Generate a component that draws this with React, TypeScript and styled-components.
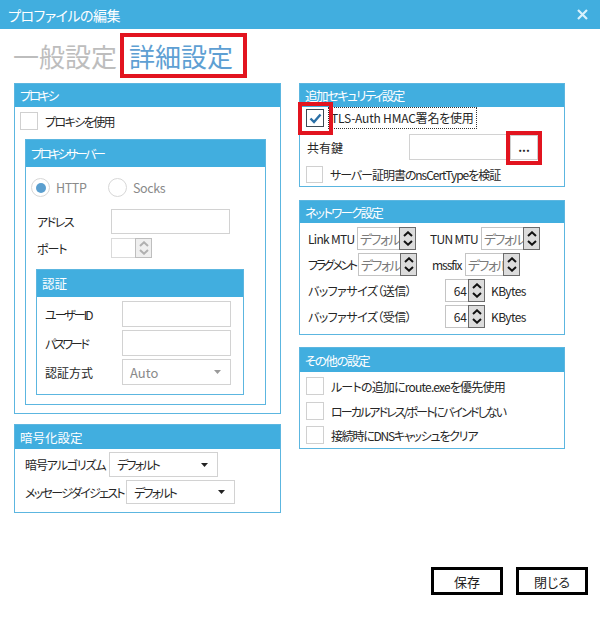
import React from "react";
import styled, { createGlobalStyle } from "styled-components";

/* 色 */
const C = {
  blue: "#41AEDF",
  border: "#5CB6E0",
  tabOff: "#BDBDBD",
  tabOn: "#5E9FD3",
  red: "#E2141F",
  text: "#262626",
  gray: "#8A8A8A",
  field: "#D2D2D2",
};

const Global = createGlobalStyle`
  html, body { margin: 0; padding: 0; background: #fff; }
  body {
    font-family: "Noto Sans CJK JP", "Noto Sans", sans-serif;
    font-feature-settings: "palt";
    color: ${C.text};
  }
`;

const Window = styled.div`
  width: 600px;
  height: 628px;
  display: flex;
  flex-direction: column;
  background: #fff;
  font-size: 12px;
`;

/* タイトルバー */
const TitleBar = styled.div`
  height: 29px;
  background: ${C.blue};
  color: #fff;
  display: flex;
  align-items: center;
  justify-content: space-between;
  padding: 0 12px 0 8px;
  font-size: 14px;
  letter-spacing: -0.5px;
`;

const Close = styled.span`
  display: flex;
  width: 11px;
  height: 11px;
`;

/* タブ */
const TabRow = styled.div`
  height: 51px;
  display: flex;
  align-items: center;
  padding-left: 13px;
  gap: 12px;
`;

const Tab = styled.div<{ $on?: boolean }>`
  position: relative;
  font-size: 26px;
  line-height: 30px;
  color: ${(p) => (p.$on ? C.tabOn : C.tabOff)};
  margin-top: 3px;
`;

const RedMark = styled.span<{ $t: number; $r: number; $b: number; $l: number }>`
  position: absolute;
  top: ${(p) => p.$t}px;
  right: ${(p) => p.$r}px;
  bottom: ${(p) => p.$b}px;
  left: ${(p) => p.$l}px;
  border: 4px solid ${C.red};
  pointer-events: none;
`;

/* 本体 */
const Main = styled.div`
  display: flex;
  gap: 18px;
  padding: 3px 0 0 14px;
`;

const Column = styled.div<{ $w: number }>`
  width: ${(p) => p.$w}px;
  display: flex;
  flex-direction: column;
`;

const Panel = styled.div<{ $mt?: number; $ml?: number; $mr?: number; $w?: number }>`
  border: 1px solid ${C.border};
  background: #fff;
  margin: ${(p) => p.$mt ?? 0}px ${(p) => p.$mr ?? 0}px 0 ${(p) => p.$ml ?? 0}px;
  ${(p) => (p.$w ? `width: ${p.$w}px;` : "")}
`;

const PanelHead = styled.div<{ $h: number; $ls?: number }>`
  height: ${(p) => p.$h}px;
  background: ${C.blue};
  color: #fff;
  font-size: 12.5px;
  letter-spacing: ${(p) => p.$ls ?? 0}px;
  display: flex;
  align-items: center;
  padding-left: 5px;
  white-space: nowrap;
`;

const PanelBody = styled.div<{ $pad: string }>`
  padding: ${(p) => p.$pad};
  display: flex;
  flex-direction: column;
`;

/* 部品 */
const Row = styled.div<{ $mt?: number; $pl?: number; $gap?: number }>`
  display: flex;
  align-items: center;
  margin-top: ${(p) => p.$mt ?? 0}px;
  padding-left: ${(p) => p.$pl ?? 0}px;
  gap: ${(p) => p.$gap ?? 0}px;
`;

const Label = styled.span<{ $w?: number; $ls?: number; $ml?: number }>`
  ${(p) => (p.$w ? `width: ${p.$w}px; flex-shrink: 0;` : "")}
  margin-left: ${(p) => p.$ml ?? 0}px;
  letter-spacing: ${(p) => p.$ls ?? 0}px;
  color: ${C.text};
  white-space: nowrap;
`;

const Box = styled.span<{ $size: number; $on?: boolean }>`
  width: ${(p) => p.$size}px;
  height: ${(p) => p.$size}px;
  box-sizing: border-box;
  border: 1px solid ${(p) => (p.$on ? "#3D4A55" : "#D0D0D0")};
  background: #fff;
  flex-shrink: 0;
  display: flex;
  align-items: center;
  justify-content: center;
`;

const Focus = styled.span<{ $ls?: number }>`
  border: 1px dotted #333;
  padding: 2px;
  line-height: 16px;
  letter-spacing: ${(p) => p.$ls ?? 0}px;
  white-space: nowrap;
`;

const Radio = styled.span<{ $on?: boolean }>`
  width: 19px;
  height: 19px;
  box-sizing: border-box;
  border: 1px solid #D7D7D7;
  border-radius: 50%;
  display: flex;
  align-items: center;
  justify-content: center;
  &::after {
    content: "";
    width: 10px;
    height: 10px;
    border-radius: 50%;
    background: ${(p) => (p.$on ? "#5B9FCF" : "transparent")};
  }
`;

const RadioItem = styled.span<{ $w?: number }>`
  display: flex;
  align-items: center;
  gap: 6px;
  ${(p) => (p.$w ? `width: ${p.$w}px;` : "")}
  color: ${C.gray};
  font-size: 12.5px;
  letter-spacing: -0.4px;
`;

const Field = styled.div<{ $w: number; $h: number }>`
  width: ${(p) => p.$w}px;
  height: ${(p) => p.$h}px;
  box-sizing: border-box;
  border: 1px solid ${C.field};
  background: #fff;
  flex-shrink: 0;
`;

const Select = styled.div<{ $w: number; $h: number; $muted?: boolean }>`
  width: ${(p) => p.$w}px;
  height: ${(p) => p.$h}px;
  box-sizing: border-box;
  border: 1px solid ${C.field};
  display: flex;
  align-items: center;
  justify-content: space-between;
  padding: 0 9px 0 7px;
  color: ${(p) => (p.$muted ? C.gray : C.text)};
  font-size: ${(p) => (p.$muted ? 13 : 12)}px;
  letter-spacing: ${(p) => (p.$muted ? 0 : -1.8)}px;
  flex-shrink: 0;
  white-space: nowrap;
`;

const Spin = styled.div<{ $h: number }>`
  display: flex;
  height: ${(p) => p.$h}px;
  flex-shrink: 0;
`;

const SpinInput = styled.div<{ $w: number; $dim?: boolean; $right?: boolean }>`
  width: ${(p) => p.$w}px;
  box-sizing: border-box;
  border: 1px solid ${(p) => (p.$dim ? "#DADADA" : "#C4C4C4")};
  border-right: none;
  overflow: hidden;
  white-space: nowrap;
  display: flex;
  align-items: center;
  justify-content: ${(p) => (p.$right ? "flex-end" : "flex-start")};
  padding: ${(p) => (p.$right ? "0 1px 0 0" : "0 0 0 2px")};
  font-size: ${(p) => (p.$right ? 12 : 13)}px;
  letter-spacing: ${(p) => (p.$right ? 0 : -1.6)}px;
  color: ${(p) => (p.$right ? C.text : "#7A7A7A")};
`;

const SpinArrows = styled.div<{ $dim?: boolean }>`
  width: 17px;
  box-sizing: border-box;
  border: 1px solid ${(p) => (p.$dim ? "#BEBEBE" : "#6B6B6B")};
  background: ${(p) => (p.$dim ? "#EFEFEF" : "#DCDCDC")};
  display: flex;
  flex-direction: column;
  align-items: center;
  justify-content: space-evenly;
`;

const SmallBtn = styled.div`
  width: 28px;
  height: 25px;
  box-sizing: border-box;
  border: 1px solid #CFCFCF;
  background: #fff;
  display: flex;
  align-items: flex-end;
  justify-content: center;
  padding-bottom: 6px;
  font-size: 12px;
  font-weight: 700;
  line-height: 1;
`;

const Marked = styled.div<{ $ml?: number }>`
  position: relative;
  display: flex;
  margin-left: ${(p) => p.$ml ?? 0}px;
`;

const Pair = styled.div<{ $w?: number }>`
  display: flex;
  align-items: center;
  ${(p) => (p.$w ? `width: ${p.$w}px; flex-shrink: 0;` : "")}
`;

const Footer = styled.div`
  margin-top: auto;
  display: flex;
  justify-content: flex-end;
  gap: 13px;
  padding: 0 12px 33px 0;
`;

const Button = styled.button`
  all: unset;
  width: 72px;
  height: 28px;
  box-sizing: border-box;
  border: 3px solid #000;
  background: #fff;
  display: flex;
  align-items: center;
  justify-content: center;
  font-size: 13px;
  color: #1E1E1E;
  font-family: inherit;
`;

/* 小物 */
const Chevron = ({ up, color }: { up?: boolean; color: string }) => (
  <svg width="10" height="6" viewBox="0 0 10 6">
    <polyline
      points={up ? "1,5 5,1.3 9,5" : "1,1 5,4.7 9,1"}
      fill="none"
      stroke={color}
      strokeWidth="2"
    />
  </svg>
);

const Caret = ({ color }: { color: string }) => (
  <svg width="7" height="4" viewBox="0 0 7 4">
    <polygon points="0,0 7,0 3.5,4" fill={color} />
  </svg>
);

function Spinner({ w, h, value, dim, right }: { w: number; h: number; value?: string; dim?: boolean; right?: boolean }) {
  const c = dim ? "#B0B0B0" : "#111";
  return (
    <Spin $h={h}>
      <SpinInput $w={w} $dim={dim} $right={right}>{value}</SpinInput>
      <SpinArrows $dim={dim}>
        <Chevron up color={c} />
        <Chevron color={c} />
      </SpinArrows>
    </Spin>
  );
}

function Check({ size = 18, on }: { size?: number; on?: boolean }) {
  return (
    <Box $size={size} $on={on}>
      {on && (
        <svg width="13" height="11" viewBox="0 0 13 11">
          <polyline points="1.5,5.5 5,9 11.5,1.5" fill="none" stroke="#2A6FA6" strokeWidth="2.4" />
        </svg>
      )}
    </Box>
  );
}

function CheckRow({ text, ls, mt, size }: { text: string; ls: number; mt?: number; size?: number }) {
  return (
    <Row $mt={mt} $gap={7}>
      <Check size={size} />
      <Label $ls={ls}>{text}</Label>
    </Row>
  );
}

export default function App() {
  return (
    <Window>
      <Global />
      <TitleBar>
        <span>プロファイルの編集</span>
        <Close>
          <svg width="11" height="11" viewBox="0 0 11 11">
            <path d="M1 1 L10 10 M10 1 L1 10" stroke="#D8F1FC" strokeWidth="2.2" />
          </svg>
        </Close>
      </TitleBar>

      <TabRow>
        <Tab>一般設定</Tab>
        <Tab $on>
          詳細設定
          <RedMark $t={-8} $r={-14} $b={-7} $l={-9} />
        </Tab>
      </TabRow>

      <Main>
        <Column $w={267}>
          <Panel>
            <PanelHead $h={23} $ls={-2.6}>プロキシ</PanelHead>
            <PanelBody $pad="5px 14px 8px 5px">
              <CheckRow text="プロキシを使用" ls={-1.6} />
              <Panel $mt={9} $ml={5}>
                <PanelHead $h={27} $ls={-2.9}>プロキシサーバー</PanelHead>
                <PanelBody $pad="11px 0 9px 0">
                  <Row $pl={5}>
                    <RadioItem $w={77}>
                      <Radio $on />
                      HTTP
                    </RadioItem>
                    <RadioItem>
                      <Radio />
                      Socks
                    </RadioItem>
                  </Row>
                  <Row $mt={12} $pl={11}>
                    <Label $w={74} $ls={-1.5}>アドレス</Label>
                    <Field $w={119} $h={25} />
                  </Row>
                  <Row $mt={4} $pl={11}>
                    <Label $w={74} $ls={-1}>ポート</Label>
                    <Spinner w={24} h={20} dim />
                  </Row>
                  <Panel $mt={11} $ml={10} $w={206}>
                    <PanelHead $h={27}>認証</PanelHead>
                    <PanelBody $pad="4px 0 9px 8px">
                      <Row>
                        <Label $w={77} $ls={-2}>ユーザーID</Label>
                        <Field $w={109} $h={26} />
                      </Row>
                      <Row $mt={3}>
                        <Label $w={77} $ls={-2.3}>パスワード</Label>
                        <Field $w={109} $h={26} />
                      </Row>
                      <Row $mt={3}>
                        <Label $w={77}>認証方式</Label>
                        <Select $w={109} $h={26} $muted>
                          Auto
                          <Caret color="#9A9A9A" />
                        </Select>
                      </Row>
                    </PanelBody>
                  </Panel>
                </PanelBody>
              </Panel>
            </PanelBody>
          </Panel>

          <Panel $mt={10}>
            <PanelHead $h={24}>暗号化設定</PanelHead>
            <PanelBody $pad="3px 0 8px 10px">
              <Row>
                <Label $w={84} $ls={-1.1}>暗号アルゴリズム</Label>
                <Select $w={109} $h={25}>
                  デフォルト
                  <Caret color="#222" />
                </Select>
              </Row>
              <Row $mt={3}>
                <Label $w={101} $ls={-1.7}>メッセージダイジェスト</Label>
                <Select $w={109} $h={24}>
                  デフォルト
                  <Caret color="#222" />
                </Select>
              </Row>
            </PanelBody>
          </Panel>
        </Column>

        <Column $w={266}>
          <Panel>
            <PanelHead $h={23} $ls={-1.6}>追加セキュリティ設定</PanelHead>
            <PanelBody $pad="0 0 3px 6px">
              <Row $gap={4}>
                <Marked>
                  <Check size={18} on />
                  <RedMark $t={-7} $r={-9} $b={-8} $l={-8} />
                </Marked>
                <Focus $ls={-0.2}>TLS-Auth HMAC署名を使用</Focus>
              </Row>
              <Row $mt={5} $pl={1}>
                <Label $w={102}>共有鍵</Label>
                <Field $w={99} $h={26} />
                <Marked $ml={2}>
                  <SmallBtn>...</SmallBtn>
                  <RedMark $t={-4} $r={-4} $b={-5} $l={-4} />
                </Marked>
              </Row>
              <CheckRow mt={6} size={17} text="サーバー証明書のnsCertTypeを検証" ls={-1.05} />
            </PanelBody>
          </Panel>

          <Panel $mt={13}>
            <PanelHead $h={22} $ls={-1.75}>ネットワーク設定</PanelHead>
            <PanelBody $pad="4px 0 6px 8px">
              <Row>
                <Pair $w={122}>
                  <Label $w={49} $ls={-0.7}>Link MTU</Label>
                  <Spinner w={42} h={23} value="デフォルト" />
                </Pair>
                <Pair>
                  <Label $w={51} $ls={-0.7}>TUN MTU</Label>
                  <Spinner w={42} h={23} value="デフォルト" />
                </Pair>
              </Row>
              <Row $mt={3}>
                <Pair $w={124}>
                  <Label $w={50} $ls={-2.3}>フラグメント</Label>
                  <Spinner w={42} h={23} value="デフォルト" />
                </Pair>
                <Pair>
                  <Label $w={33} $ls={-1}>mssfix</Label>
                  <Spinner w={38} h={23} value="デフォルト" />
                </Pair>
              </Row>
              <Row $mt={3}>
                <Label $w={137} $ls={-0.55}>バッファサイズ（送信）</Label>
                <Spinner w={23} h={23} value="64" right />
                <Label $ml={6} $ls={-0.6}>KBytes</Label>
              </Row>
              <Row $mt={3}>
                <Label $w={137} $ls={-0.55}>バッファサイズ（受信）</Label>
                <Spinner w={23} h={23} value="64" right />
                <Label $ml={6} $ls={-0.6}>KBytes</Label>
              </Row>
            </PanelBody>
          </Panel>

          <Panel $mt={12}>
            <PanelHead $h={24} $ls={-1.5}>その他の設定</PanelHead>
            <PanelBody $pad="5px 0 4px 6px">
              <CheckRow text="ルートの追加にroute.exeを優先使用" ls={-0.8} />
              <CheckRow mt={7} text="ローカルアドレス/ポートにバインドしない" ls={-1.9} />
              <CheckRow mt={6} text="接続時にDNSキャッシュをクリア" ls={-1.25} />
            </PanelBody>
          </Panel>
        </Column>
      </Main>

      <Footer>
        <Button>保存</Button>
        <Button>閉じる</Button>
      </Footer>
    </Window>
  );
}
